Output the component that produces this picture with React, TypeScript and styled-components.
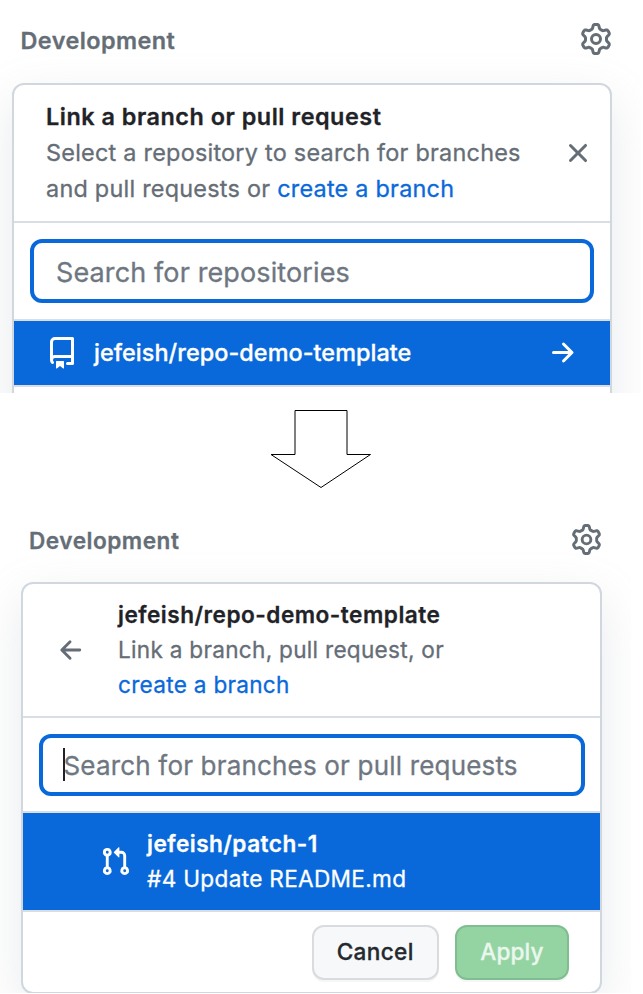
import React from "react";
import styled, { createGlobalStyle } from "styled-components";

const GlobalStyle = createGlobalStyle`
  *, *::before, *::after { box-sizing: border-box; }
  html, body { margin: 0; background: #fff; overflow: hidden; }
  body {
    font-family: Inter, "Liberation Sans", sans-serif;
    font-weight: 400;
    color: #1f2328;
    -webkit-text-stroke: 0.3px currentColor;
  }
`;

const Page = styled.main`
  width: 643px;
  height: 994px;
  background: #fff;
  overflow: hidden;
`;

const Section = styled.section<{ $width: number; $height: number; $inset: string }>`
  width: ${(p) => p.$width}px;
  height: ${(p) => p.$height}px;
  padding: ${(p) => p.$inset};
  overflow: hidden;
`;

const SectionHeader = styled.header<{ $inset: string; $height: number }>`
  display: flex;
  align-items: flex-start;
  justify-content: space-between;
  height: ${(p) => p.$height}px;
  padding: ${(p) => p.$inset};
  color: #656d76;
`;

const SectionTitle = styled.h2<{ $size: number; $line: number; $spacing: number }>`
  margin: 0;
  font-size: ${(p) => p.$size}px;
  font-weight: 600;
  line-height: ${(p) => p.$line}px;
  letter-spacing: ${(p) => p.$spacing}px;
`;

const Icon = styled.svg<{ $size: number }>`
  display: block;
  flex: none;
  width: ${(p) => p.$size}px;
  height: ${(p) => p.$size}px;
  fill: currentColor;
`;

const Card = styled.div<{ $width: number; $height: number }>`
  width: ${(p) => p.$width}px;
  height: ${(p) => p.$height}px;
  border: 2px solid #d0d7de;
  border-radius: 12px;
  background: #fff;
  box-shadow: 0 16px 48px rgba(140, 149, 159, 0.2);
  overflow: hidden;
`;

const CardHeader = styled.div<{ $height: number; $inset: string }>`
  display: flex;
  align-items: center;
  height: ${(p) => p.$height}px;
  padding: ${(p) => p.$inset};
  border-bottom: 2px solid #d8dee4;
  color: #656d76;
`;

const Copy = styled.div<{ $size: number; $line: number; $spacing: number }>`
  flex: 1;
  font-size: ${(p) => p.$size}px;
  line-height: ${(p) => p.$line}px;
  letter-spacing: ${(p) => p.$spacing}px;
  white-space: nowrap;
`;

const HeaderCopy = styled(Copy)`
  padding: 0 0 2px 31px;
`;

const CopyTitle = styled.div<{ $spacing: number }>`
  font-weight: 600;
  letter-spacing: ${(p) => p.$spacing}px;
  color: #1f2328;
`;

const Link = styled.a`
  color: #0969da;
`;

const SearchArea = styled.div<{ $height: number; $inset: string }>`
  height: ${(p) => p.$height}px;
  padding: ${(p) => p.$inset};
  border-bottom: 2px solid #d8dee4;
`;

const SearchField = styled.div<{ $caret?: boolean }>`
  position: relative;
  height: 100%;
  &::after {
    content: "";
    display: ${(p) => (p.$caret ? "block" : "none")};
    position: absolute;
    left: 24.5px;
    top: 14px;
    width: 2px;
    height: 33px;
    background: #1f2328;
  }
`;

const SearchInput = styled.input<{ $size: number; $spacing: number; $inset: string }>`
  display: block;
  width: 100%;
  height: 100%;
  padding: ${(p) => p.$inset};
  border: 4px solid #0969da;
  border-radius: 12px;
  outline: none;
  background: #fff;
  font-family: inherit;
  font-weight: inherit;
  font-size: ${(p) => p.$size}px;
  letter-spacing: ${(p) => p.$spacing}px;
  &::placeholder { color: #6e7781; opacity: 1; }
`;

const Option = styled.div<{ $height: number; $inset: string; $gap: number }>`
  display: flex;
  align-items: center;
  gap: ${(p) => p.$gap}px;
  height: ${(p) => p.$height}px;
  padding: ${(p) => p.$inset};
  border-bottom: 2px solid #d8dee4;
  background: #0969da;
  background-clip: padding-box;
  color: #fff;
`;

const OptionName = styled.div<{ $weight: number; $spacing: number }>`
  font-weight: ${(p) => p.$weight};
  letter-spacing: ${(p) => p.$spacing}px;
`;

const ArrowRow = styled.div`
  display: flex;
  justify-content: center;
  height: 107px;
  padding: 16px 1px 0 0;
`;

const Actions = styled.footer`
  display: flex;
  justify-content: flex-end;
  gap: 16px;
  padding: 13px 31px 0 0;
`;

const Button = styled.button<{ $primary?: boolean }>`
  width: ${(p) => (p.$primary ? 114 : 127.5)}px;
  height: 55px;
  padding: 0 0 3px;
  border: 2px solid ${(p) => (p.$primary ? "#80bd90" : "#d9dbde")};
  border-radius: 12px;
  background: ${(p) => (p.$primary ? "#94d3a2" : "#f6f8fa")};
  box-shadow: 0 2px 0 rgba(31, 35, 40, 0.04);
  color: ${(p) => (p.$primary ? "#eaf7ed" : "#24292f")};
  font: 500 22.6px Inter, "Liberation Sans", sans-serif;
  letter-spacing: ${(p) => (p.$primary ? 0.1 : 0.35)}px;
`;

const paths = {
  gear: "M7.429 1.525a6.593 6.593 0 011.142 0c.036.003.108.036.137.146l.289 1.105c.147.56.55.967.997 1.189.174.086.341.183.501.29.417.278.97.423 1.53.27l1.102-.303c.11-.03.175.016.195.046.219.31.41.641.573.989.014.031.022.11-.059.19l-.815.806c-.411.406-.562.957-.53 1.456a4.588 4.588 0 010 .582c-.032.499.119 1.05.53 1.456l.815.806c.08.08.073.159.059.19a6.494 6.494 0 01-.573.99c-.02.029-.086.074-.195.045l-1.103-.303c-.559-.153-1.112-.008-1.529.27-.16.107-.327.204-.5.29-.449.222-.851.628-.998 1.189l-.289 1.105c-.029.11-.101.143-.137.146a6.613 6.613 0 01-1.142 0c-.036-.003-.108-.037-.137-.146l-.289-1.105c-.147-.56-.55-.967-.997-1.189a4.502 4.502 0 01-.501-.29c-.417-.278-.97-.423-1.53-.27l-1.102.303c-.11.03-.175-.016-.195-.046a6.492 6.492 0 01-.573-.989c-.014-.031-.022-.11.059-.19l.815-.806c.411-.406.562-.957.53-1.456a4.587 4.587 0 010-.582c.032-.499-.119-1.05-.53-1.456l-.815-.806c-.08-.08-.073-.159-.059-.19a6.44 6.44 0 01.573-.99c.02-.029.086-.075.195-.045l1.103.303c.559.153 1.112.008 1.529-.27.16-.107.327-.204.5-.29.449-.222.851-.628.998-1.189l.289-1.105c.029-.11.101-.143.137-.146zM8 0c-.236 0-.47.01-.701.03-.743.065-1.29.615-1.458 1.261l-.29 1.106c-.017.066-.078.158-.211.224a5.994 5.994 0 00-.668.386c-.123.082-.233.09-.3.071L3.27 2.776c-.644-.177-1.392.02-1.82.63a7.977 7.977 0 00-.704 1.217c-.315.675-.111 1.422.363 1.891l.815.806c.05.048.098.147.088.294a6.084 6.084 0 000 .772c.01.147-.038.246-.088.294l-.815.806c-.474.469-.678 1.216-.363 1.891.2.428.436.835.704 1.218.428.609 1.176.806 1.82.63l1.103-.303c.066-.019.176-.011.299.071.213.143.436.272.668.386.133.066.194.158.212.224l.289 1.106c.169.646.715 1.196 1.458 1.26a8.094 8.094 0 001.402 0c.743-.064 1.29-.614 1.458-1.26l.29-1.106c.017-.066.078-.158.211-.224a5.98 5.98 0 00.668-.386c.123-.082.233-.09.3-.071l1.102.302c.644.177 1.392-.02 1.82-.63.268-.382.505-.789.704-1.217.315-.675.111-1.422-.364-1.891l-.814-.806c-.05-.048-.098-.147-.088-.294a6.1 6.1 0 000-.772c-.01-.147.039-.246.088-.294l.814-.806c.475-.469.679-1.216.364-1.891a7.992 7.992 0 00-.704-1.218c-.428-.609-1.176-.806-1.82-.63l-1.103.303c-.066.019-.176.011-.299-.071a5.991 5.991 0 00-.668-.386c-.133-.066-.194-.158-.212-.224L10.16 1.29C9.99.645 9.444.095 8.701.031A8.094 8.094 0 008 0zm1.5 8a1.5 1.5 0 11-3 0 1.5 1.5 0 013 0zM11 8a3 3 0 11-6 0 3 3 0 016 0z",
  close: "M3.72 3.72a.75.75 0 011.06 0L8 6.94l3.22-3.22a.75.75 0 111.06 1.06L9.06 8l3.22 3.22a.75.75 0 11-1.06 1.06L8 9.06l-3.22 3.22a.75.75 0 01-1.06-1.06L6.94 8 3.72 4.78a.75.75 0 010-1.06z",
  repo: "M2 2.5A2.5 2.5 0 014.5 0h8.75a.75.75 0 01.75.75v12.5a.75.75 0 01-.75.75h-2.5a.75.75 0 110-1.5h1.75v-2h-8a1 1 0 00-.714 1.7.75.75 0 01-1.072 1.05A2.495 2.495 0 012 11.5v-9zm10.5-1V9h-8c-.356 0-.694.074-1 .208V2.5a1 1 0 011-1h8zM5 12.25v3.25a.25.25 0 00.4.2l1.45-1.087a.25.25 0 01.3 0L8.6 15.7a.25.25 0 00.4-.2v-3.25a.25.25 0 00-.25-.25h-3.5a.25.25 0 00-.25.25z",
  right: "M8.22 2.97a.75.75 0 011.06 0l4.25 4.25a.75.75 0 010 1.06l-4.25 4.25a.75.75 0 01-1.06-1.06l2.97-2.97H3.75a.75.75 0 010-1.5h7.44L8.22 4.03a.75.75 0 010-1.06z",
  left: "M7.78 12.53a.75.75 0 01-1.06 0L2.47 8.28a.75.75 0 010-1.06l4.25-4.25a.75.75 0 011.06 1.06L4.81 7h7.44a.75.75 0 010 1.5H4.81l2.97 2.97a.75.75 0 010 1.06z",
  pull: "M7.177 3.073L9.573.677A.25.25 0 0110 .854v4.792a.25.25 0 01-.427.177L7.177 3.427a.25.25 0 010-.354zM3.75 2.5a.75.75 0 100 1.5.75.75 0 000-1.5zm-2.25.75a2.25 2.25 0 113 2.122v5.256a2.251 2.251 0 11-1.5 0V5.372A2.25 2.25 0 011.5 3.25zM11 2.5h-1V4h1a1 1 0 011 1v5.628a2.251 2.251 0 101.5 0V5A2.5 2.5 0 0011 2.5zm1 10.25a.75.75 0 111.5 0 .75.75 0 01-1.5 0zM3.75 12a.75.75 0 100 1.5.75.75 0 000-1.5z",
};

function Glyph({ name, size = 32 }: { name: keyof typeof paths; size?: number }) {
  return (
    <Icon $size={size} viewBox="0 0 16 16" overflow="visible" aria-hidden="true">
      <path fillRule="evenodd" d={paths[name]} />
    </Icon>
  );
}

function RepositoryStep() {
  return (
    <Section $width={641} $height={393} $inset="23px 0 0 12px">
      <SectionHeader $height={60} $inset="0 29px 0 8.5px">
        <SectionTitle $size={23.4} $line={36} $spacing={0.44}>Development</SectionTitle>
        <Glyph name="gear" />
      </SectionHeader>
      <Card $width={600} $height={480}>
        <CardHeader $height={138} $inset="0 16px 0 32px">
          <Copy $size={23.4} $line={36} $spacing={0.25}>
            <CopyTitle $spacing={0.52}>Link a branch or pull request</CopyTitle>
            <div>Select a repository to search for branches</div>
            <div>and pull requests or <Link>create a branch</Link></div>
          </Copy>
          <Glyph name="close" />
        </CardHeader>
        <SearchArea $height={98} $inset="16px">
          <SearchField>
            <SearchInput $size={27} $spacing={0.12} $inset="2px 22px 0" placeholder="Search for repositories" />
          </SearchField>
        </SearchArea>
        <Option $height={66} $inset="0 32px" $gap={16}>
          <Glyph name="repo" />
          <Copy $size={23.4} $line={36} $spacing={0}>
            <OptionName $weight={500} $spacing={0.06}>jefeish/repo-demo-template</OptionName>
          </Copy>
          <Glyph name="right" />
        </Option>
      </Card>
    </Section>
  );
}

function BranchStep() {
  return (
    <Section $width={631} $height={493} $inset="24px 0 0 21px">
      <SectionHeader $height={58} $inset="0 29px 0 8px">
        <SectionTitle $size={22.6} $line={34} $spacing={0.52}>Development</SectionTitle>
        <Glyph name="gear" size={31} />
      </SectionHeader>
      <Card $width={581} $height={412}>
        <CardHeader $height={134} $inset="0 16px 0 33px">
          <Glyph name="left" size={31} />
          <HeaderCopy $size={22.6} $line={35} $spacing={0.28}>
            <CopyTitle $spacing={0.5}>jefeish/repo-demo-template</CopyTitle>
            <div>Link a branch, pull request, or</div>
            <div><Link>create a branch</Link></div>
          </HeaderCopy>
        </CardHeader>
        <SearchArea $height={95} $inset="15.5px">
          <SearchField $caret>
            <SearchInput $size={26} $spacing={0.18} $inset="2px 21px 0" placeholder="Search for branches or pull requests" />
          </SearchField>
        </SearchArea>
        <Option $height={99} $inset="0 32px 1px 77px" $gap={16}>
          <Glyph name="pull" size={31} />
          <Copy $size={22.6} $line={35} $spacing={0.32}>
            <OptionName $weight={600} $spacing={0.47}>jefeish/patch-1</OptionName>
            <div>#4 Update README.md</div>
          </Copy>
        </Option>
        <Actions>
          <Button>Cancel</Button>
          <Button $primary>Apply</Button>
        </Actions>
      </Card>
    </Section>
  );
}

export default function App() {
  return (
    <Page>
      <GlobalStyle />
      <RepositoryStep />
      <ArrowRow>
        <svg width="102" height="80" viewBox="0 0 102 80" fill="#fff" stroke="#000" strokeWidth="1">
          <path d="M25 1.5H77V45.5H100.5L51 78.5L1 45.5H25Z" />
        </svg>
      </ArrowRow>
      <BranchStep />
    </Page>
  );
}
